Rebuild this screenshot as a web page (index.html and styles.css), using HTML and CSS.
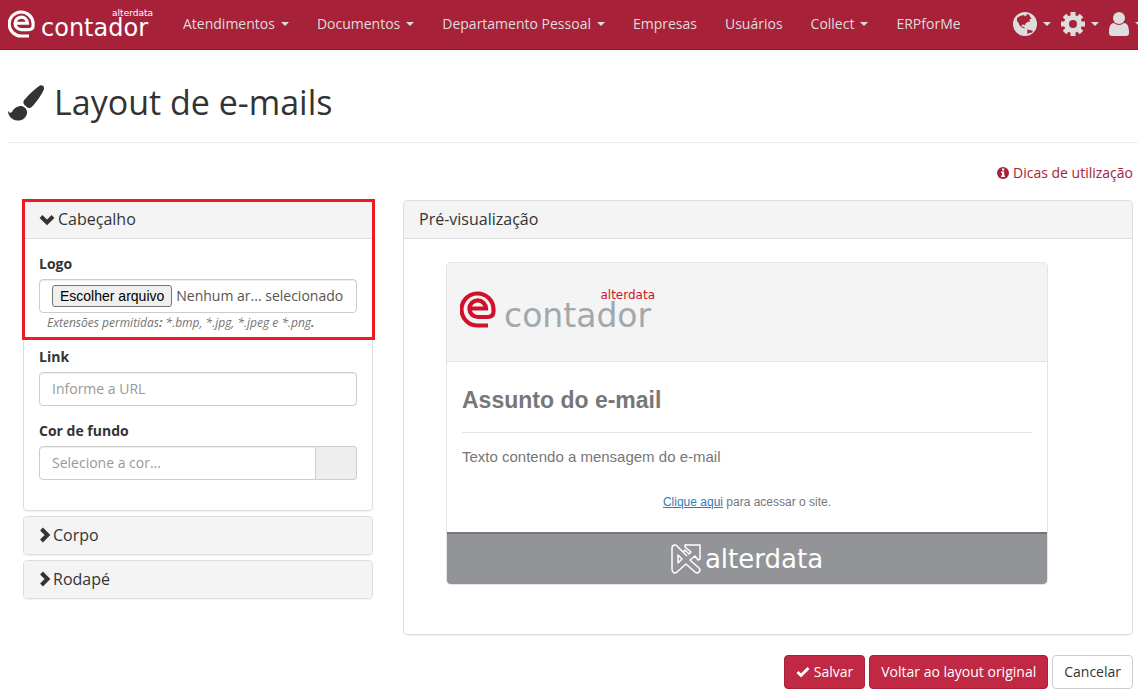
FILE: index.html
```html
<!DOCTYPE html>
<html lang="pt-BR">
<head>
<meta charset="UTF-8">
<meta name="viewport" content="width=device-width, initial-scale=1.0">
<title>Layout de e-mails</title>
<link rel="stylesheet" href="styles.css">
</head>
<body>

<svg class="sprite" aria-hidden="true">
  <symbol id="logo-e" viewBox="0 0 36 37">
    <path d="M28 34.500H18A16 16 0 1 1 33.500 18V20.500Q33.500 26 27.500 26H18A8.300 8.300 0 1 1 26 17.500H11" fill="none" stroke="currentColor" stroke-width="4.200"/>
  </symbol>
  <symbol id="chevron" viewBox="0 0 14 16">
    <path d="M2.500 2L8.500 8l-6 6" fill="none" stroke="currentColor" stroke-width="4"/>
  </symbol>
  <symbol id="chevron-down" viewBox="0 0 16 16">
    <path d="M2 5.500l6 6 6-6" fill="none" stroke="currentColor" stroke-width="4"/>
  </symbol>
</svg>

<nav class="navbar">
  <a class="brand" href="#">
    <svg class="brand-mark"><use href="#logo-e"/></svg>
    <span class="brand-text"><small>alterdata</small><span>contador</span></span>
  </a>
  <ul class="menu">
    <li><a href="#">Atendimentos <i class="caret"></i></a></li>
    <li><a href="#">Documentos <i class="caret"></i></a></li>
    <li><a href="#">Departamento Pessoal <i class="caret"></i></a></li>
    <li><a href="#">Empresas</a></li>
    <li><a href="#">Usuários</a></li>
    <li><a href="#">Collect <i class="caret"></i></a></li>
    <li><a href="#">ERPforMe</a></li>
  </ul>
  <ul class="menu-icons">
    <li><a href="#" aria-label="Idioma">
      <svg viewBox="0 0 24 24" width="24" height="24"><circle cx="12" cy="12" r="12" fill="currentColor"/><path class="land" d="M4 6L7 4l4-1 1 1.500L14 3l-1-1 3 .5 1 2 1.500 2-2 1 .5 2-2.500.5-2 1.500-.5 2-1.500-1-2 .5.5 1.500 2 .5 1 1.500-2-.5-3-2-1.500-3L4 9zM14 17.500l3 .5 3 1-1 1.500-2.500.5-2.500 1 .5-2z"/></svg>
      <i class="caret"></i></a></li>
    <li><a href="#" aria-label="Configurações">
      <svg viewBox="0 0 24 24" width="24" height="24" fill="none" stroke="currentColor"><circle cx="12" cy="12" r="6.500" stroke-width="5"/><path d="M12 0v4M12 20v4M0 12h4M20 12h4M3.500 3.500l3 3M17.500 17.500l3 3M3.500 20.500l3-3M17.500 6.500l3-3" stroke-width="5"/></svg>
      <i class="caret"></i></a></li>
    <li><a href="#" aria-label="Usuário">
      <svg viewBox="0 0 20 24" width="20" height="24" fill="currentColor"><circle cx="10" cy="6" r="6"/><path d="M5 11q5 4 10 0c3 0 5 3 5 9v1q0 3-3 3H3q-3 0-3-3v-1c0-6 2-9 5-9z"/></svg>
      <i class="caret"></i></a></li>
  </ul>
</nav>

<header class="page-header">
  <svg class="brush" viewBox="0 0 36 36" fill="currentColor" aria-hidden="true"><path d="M32 0.500c2.500-1 4.500 1 4 3.500-.5 2-2 4.500-5 9-3 4-6 8-8 9.500-1.500 1-3 .8-4.500-.7l-2-1.800c-1.500-1.500-1.500-3.500-.3-5C19 12 22 8.500 25 6c3-2.500 5-4.500 7-5.500zM10 21.500c2-1 5-.5 7 1.200 2 2 2.500 4.500 1.700 7C17 34 13 36 9 35.500 4 35 0 31 0 26l2 2 2-1c1-2.500 3-4.500 6-5.500z"/></svg>
  <h1>Layout de e-mails</h1>
</header>

<main class="content">
  <div class="tips">
    <a href="#"><svg viewBox="0 0 12 12" width="12" height="12" aria-hidden="true"><circle cx="6" cy="6" r="6" fill="currentColor"/><path d="M5 1.500h2.200v2H5zM4 4.500h3.200v4H8V10H4V8.500h1V6H4z" fill="#fff"/></svg> Dicas de utilização</a>
  </div>

  <div class="columns">
    <div class="settings">
      <section class="panel highlighted">
        <h2 class="panel-heading"><svg class="chevron open"><use href="#chevron-down"/></svg>Cabeçalho</h2>
        <form class="panel-body">
          <div class="form-group file-group">
            <label for="logoFile">Logo</label>
            <div class="form-control file-control">
              <input type="file" id="logoFile" class="file-input" accept=".bmp,.jpg,.jpeg,.png">
              <button type="button" class="file-btn" id="chooseFile">Escolher arquivo</button>
              <span>Nenhum ar... selecionado</span>
            </div>
            <p class="help">Extensões permitidas<b>:</b> *.bmp, *.jpg, *.jpeg e *.png<b>.</b></p>
          </div>
          <div class="form-group">
            <label for="linkUrl">Link</label>
            <input type="text" id="linkUrl" class="form-control" placeholder="Informe a URL">
          </div>
          <div class="form-group">
            <label for="bgColor">Cor de fundo</label>
            <div class="input-group">
              <input type="text" id="bgColor" class="form-control" placeholder="Selecione a cor...">
              <button type="button" class="color-addon" aria-label="Escolher cor"></button>
            </div>
          </div>
        </form>
      </section>
      <section class="panel">
        <h2 class="panel-heading"><svg class="chevron"><use href="#chevron"/></svg>Corpo</h2>
      </section>
      <section class="panel">
        <h2 class="panel-heading"><svg class="chevron"><use href="#chevron"/></svg>Rodapé</h2>
      </section>
    </div>

    <section class="panel preview">
      <h2 class="panel-heading">Pré-visualização</h2>
      <div class="email">
        <div class="email-header">
          <svg class="email-mark"><use href="#logo-e"/></svg>
          <span class="brand-text email-brand"><small>alterdata</small><span>contador</span></span>
        </div>
        <div class="email-body">
          <h3>Assunto do e-mail</h3>
          <p>Texto contendo a mensagem do e-mail</p>
          <p class="email-link"><a href="#">Clique aqui</a> para acessar o site.</p>
        </div>
        <div class="email-footer">
          <svg viewBox="0 0 30 30" width="30" height="30" fill="none" stroke="currentColor" stroke-width="1.500" stroke-linejoin="round" aria-hidden="true"><path d="M6 2L12 8L14 6L18 10L20 8L14 3V1H29V15L27 16L24 12L19 16L28 24Q30 26 28 28Q26 30 24 28L15 20L6 28Q4 30 2 28Q1 27 1 25V4Q1 1 4 1Q5 1 6 2zM12 8L16 12M7 11V19L11 15z"/></svg>
          <span>alterdata</span>
        </div>
      </div>
    </section>
  </div>

  <div class="actions">
    <button type="button" class="btn btn-primary"><svg viewBox="0 0 14 12" width="14" height="12" aria-hidden="true"><path d="M1.500 6l3.500 3.500L12.500 2" fill="none" stroke="currentColor" stroke-width="3"/></svg> Salvar</button>
    <button type="button" class="btn btn-primary">Voltar ao layout original</button>
    <button type="button" class="btn">Cancelar</button>
  </div>
</main>

<script>
document.getElementById('chooseFile').addEventListener('click', () => {
  document.getElementById('logoFile').click();
});
</script>

</body>
</html>
```
FILE: styles.css
```css
* {
  box-sizing: border-box;
}
body {
  margin: 0;
  font-family: "Open Sans", "Noto Sans", sans-serif;
  font-size: 14px;
  line-height: 20px;
  color: #333;
  background-color: #fff;
}
h1, h2, h3, p, ul {
  margin: 0;
  padding: 0;
  font-weight: normal;
}
input, button {
  font: inherit;
}
.sprite {
  display: none;
}

/* navbar */
.navbar {
  display: flex;
  align-items: center;
  height: 50px;
  padding: 0 0 2px 8px;
  background-color: #a72239;
  border-bottom: 1px solid #851a2c;
  color: #ddd;
  overflow: hidden;
}
.navbar a {
  color: inherit;
  text-decoration: none;
}
.navbar ul {
  display: flex;
  list-style: none;
}
.brand {
  display: flex;
  align-items: flex-start;
  gap: 6px;
  width: 161px;
  height: 28px;
}
.navbar .brand {
  color: #fff;
}
.brand-mark {
  width: 27px;
  height: 28px;
}
.brand-text {
  display: flex;
  flex-direction: column;
  width: 112px;
  font-family: "DejaVu Sans", sans-serif;
  font-size: 24px;
  line-height: 22px;
}
.brand-text small {
  align-self: flex-end;
  font-size: 9px;
  line-height: 7px;
}
.menu a {
  display: flex;
  align-items: center;
  gap: 6px;
  padding: 14px;
  white-space: nowrap;
}
.caret {
  flex: none;
  border-top: 4px solid;
  border-left: 4px solid transparent;
  border-right: 4px solid transparent;
}
.navbar .menu-icons {
  margin-left: auto;
  margin-right: -5px;
  gap: 10px;
}
.menu-icons a {
  display: flex;
  align-items: center;
  gap: 6px;
}
.land {
  fill: #a72239;
}

/* title */
.page-header {
  display: flex;
  align-items: center;
  gap: 10px;
  margin: 31px 0 20px 8px;
  padding-bottom: 18px;
  border-bottom: 1px solid #eee;
}
.page-header h1 {
  font-size: 34px;
  line-height: 43px;
}
.brush {
  width: 36px;
  height: 36px;
}

.content {
  padding: 0 5px 9px 23px;
}
.tips {
  margin-bottom: 17px;
  text-align: right;
}
.tips a {
  color: #a72239;
  text-decoration: none;
}
.tips svg {
  vertical-align: -1px;
}

/* panels */
.columns {
  display: grid;
  grid-template-columns: minmax(0, 35fr) minmax(0, 73fr);
  gap: 30px;
}
.settings {
  display: flex;
  flex-direction: column;
  gap: 5px;
}
.panel {
  position: relative;
  border: 1px solid #ddd;
  border-radius: 4px;
  box-shadow: 0 1px 1px rgba(0, 0, 0, 0.05);
}
.panel-heading {
  display: flex;
  align-items: center;
  height: 37px;
  padding: 0 15px 2px;
  font-size: 16px;
  background-color: #f4f4f4;
  border-radius: 3px;
}
.panel-heading:not(:last-child) {
  height: 38px;
  border-bottom: 1px solid #ddd;
  border-radius: 3px 3px 0 0;
}
.chevron {
  width: 14px;
  height: 16px;
}
.chevron.open {
  width: 16px;
  margin-right: 3px;
}
.highlighted::after {
  content: "";
  position: absolute;
  top: -2px;
  left: -2px;
  right: -3px;
  height: 135px;
  border: 3px solid #ed1c24;
  pointer-events: none;
}
.panel-body {
  padding: 15px;
}
.form-group {
  margin-bottom: 15px;
}
.form-group label {
  display: block;
  margin-bottom: 5px;
  font-weight: bold;
}
.form-control {
  display: block;
  width: 100%;
  height: 34px;
  padding: 5px 12px 7px;
  color: #555;
  background-color: #fff;
  border: 1px solid #ccc;
  border-radius: 4px;
  box-shadow: inset 0 1px 1px rgba(0, 0, 0, 0.075);
}
.form-control::placeholder {
  color: #999;
}
.file-control {
  display: flex;
  align-items: center;
  gap: 4px;
  padding: 6px 12px;
  white-space: nowrap;
}
.file-input {
  position: absolute;
  width: 1px;
  height: 1px;
  opacity: 0;
}
.file-btn {
  height: 22px;
  padding: 0 7px;
  color: #000;
  background-color: #efefef;
  border: 1px solid #767676;
  border-radius: 3px;
  font-family: "Liberation Sans", Arial, sans-serif;
  line-height: 20px;
}
.file-group {
  margin-bottom: 14px;
}
.help {
  padding-left: 8px;
  font-size: 12px;
  font-style: italic;
  color: #737373;
}
.input-group {
  display: flex;
}
.input-group .form-control {
  flex: 1;
  border-radius: 4px 0 0 4px;
}
.color-addon {
  width: 41px;
  background-color: #eee;
  border: 1px solid #ccc;
  border-left: 0;
  border-radius: 0 4px 4px 0;
}

/* email preview */
.preview {
  padding-bottom: 49px;
}
.email {
  width: calc(100% - 126px);
  margin: 23px 0 0 42px;
  border: 1px solid #e4e4e4;
  border-radius: 5px;
  overflow: hidden;
  font-family: "Liberation Sans", Arial, sans-serif;
  color: #777;
}
.email-header {
  display: flex;
  gap: 8px;
  height: 99px;
  padding: 28px 13px;
  background-color: #f4f4f4;
  border-bottom: 1px solid #e4e4e4;
}
.email-mark {
  width: 36px;
  height: 37px;
  color: #d0112b;
}
.email-brand {
  width: 151px;
  font-size: 33px;
  line-height: 31px;
  color: #a1a9ad;
}
.email-brand small {
  font-size: 12px;
  line-height: 9px;
  color: #d0112b;
}
.email-body {
  padding: 24px 15px 20px;
  font-size: 15px;
}
.email-body h3 {
  margin-bottom: 14px;
  padding-bottom: 18px;
  border-bottom: 1px solid #e4e4e4;
  font-size: 23px;
  line-height: 28px;
  font-weight: bold;
}
.email-body .email-link {
  margin-top: 25px;
  font-size: 12px;
  text-align: center;
}
.email-link a {
  color: #337ab7;
}
.email-footer {
  display: flex;
  align-items: center;
  justify-content: center;
  gap: 4px;
  height: 52px;
  border-top: 2px solid #777;
  background-color: #939498;
  color: #fff;
  font-family: "DejaVu Sans", sans-serif;
  font-size: 26px;
}

/* buttons */
.actions {
  display: flex;
  justify-content: flex-end;
  gap: 4px;
  margin-top: 20px;
}
.btn {
  height: 34px;
  padding: 0 11px;
  color: #333;
  background-color: #fff;
  border: 1px solid #ccc;
  border-radius: 4px;
  cursor: pointer;
}
.btn-primary {
  color: #fff;
  background-color: #c12844;
  border-color: #a72239;
}
.btn svg {
  vertical-align: -1px;
}
```
